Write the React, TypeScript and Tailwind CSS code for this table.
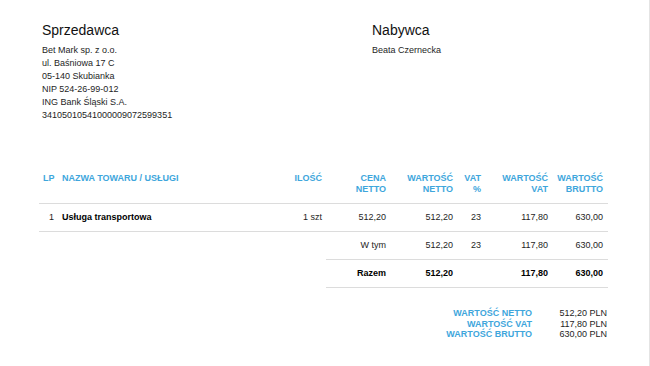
import React from "react";

const blue = "text-[#3ea6dc]";

export default function App() {
  const cellR = "px-[4px] text-right";
  return (
    <div
      className="w-[650px] h-[366px] bg-white border-r border-[#e4e4e4] text-[#1e1e1e] overflow-hidden"
      style={{ fontFamily: '"Liberation Sans", Arial, Helvetica, sans-serif' }}
    >
      <div className="flex pl-[42px] pt-[20px]">
        <div className="w-[330px]">
          <div className="text-[14px] leading-[20px] text-[#111]">Sprzedawca</div>
          <div className="mt-[4px] text-[9px] leading-[13px]">
            <div>Bet Mark sp. z o.o.</div>
            <div>ul. Baśniowa 17 C</div>
            <div>05-140 Skubianka</div>
            <div>NIP 524-26-99-012</div>
            <div>ING Bank Śląski S.A.</div>
            <div>34105010541000009072599351</div>
          </div>
        </div>
        <div>
          <div className="text-[14px] leading-[20px] text-[#111]">Nabywca</div>
          <div className="mt-[4px] text-[9px] leading-[13px]">
            <div>Beata Czernecka</div>
          </div>
        </div>
      </div>

      <div className="pl-[39px] mt-[51px]">
        <table className="table-fixed border-collapse w-[569px] text-[9px]">
          <colgroup>
            <col className="w-[19px]" />
            <col className="w-[212px]" />
            <col className="w-[56px]" />
            <col className="w-[64px]" />
            <col className="w-[67px]" />
            <col className="w-[28px]" />
            <col className="w-[67px]" />
            <col className="w-[56px]" />
          </colgroup>
          <thead>
            <tr className={`font-bold uppercase leading-[11px] ${blue} border-b border-[#dcdcdc] align-top`}>
              <th className="px-[4px] pb-[8px] text-left font-bold">LP</th>
              <th className="px-[4px] pb-[8px] text-left font-bold">NAZWA TOWARU / USŁUGI</th>
              <th className={`${cellR} pb-[8px] font-bold`}>ILOŚĆ</th>
              <th className={`${cellR} pb-[8px] font-bold`}>CENA<br />NETTO</th>
              <th className={`${cellR} pb-[8px] font-bold`}>WARTOŚĆ<br />NETTO</th>
              <th className={`${cellR} pb-[8px] font-bold`}>VAT<br />%</th>
              <th className={`${cellR} pb-[8px] font-bold`}>WARTOŚĆ<br />VAT</th>
              <th className="pl-[4px] pr-[5px] text-right pb-[8px] font-bold">WARTOŚĆ<br />BRUTTO</th>
            </tr>
          </thead>
          <tbody className="leading-[13px]">
            <tr className="border-b border-[#dcdcdc]">
              <td className={`${cellR} py-[7px]`}>1</td>
              <td className="px-[4px] py-[7px] font-bold text-black">Usługa transportowa</td>
              <td className={`${cellR} py-[7px]`}>1 szt</td>
              <td className={`${cellR} py-[7px]`}>512,20</td>
              <td className={`${cellR} py-[7px]`}>512,20</td>
              <td className={`${cellR} py-[7px]`}>23</td>
              <td className={`${cellR} py-[7px]`}>117,80</td>
              <td className="pl-[4px] pr-[5px] text-right py-[7px]">630,00</td>
            </tr>
            <tr>
              <td className="py-[7px]"></td>
              <td className="py-[7px]"></td>
              <td className="py-[7px]"></td>
              <td className={`${cellR} py-[7px] border-b border-[#dcdcdc]`}>W tym</td>
              <td className={`${cellR} py-[7px] border-b border-[#dcdcdc]`}>512,20</td>
              <td className={`${cellR} py-[7px] border-b border-[#dcdcdc]`}>23</td>
              <td className={`${cellR} py-[7px] border-b border-[#dcdcdc]`}>117,80</td>
              <td className="pl-[4px] pr-[5px] text-right py-[7px] border-b border-[#dcdcdc]">630,00</td>
            </tr>
            <tr className="font-bold text-black">
              <td className="py-[7px]"></td>
              <td className="py-[7px]"></td>
              <td className="py-[7px]"></td>
              <td className={`${cellR} py-[7px] border-b border-[#dcdcdc]`}>Razem</td>
              <td className={`${cellR} py-[7px] border-b border-[#dcdcdc]`}>512,20</td>
              <td className={`${cellR} py-[7px] border-b border-[#dcdcdc]`}></td>
              <td className={`${cellR} py-[7px] border-b border-[#dcdcdc]`}>117,80</td>
              <td className="pl-[4px] pr-[5px] text-right py-[7px] border-b border-[#dcdcdc]">630,00</td>
            </tr>
          </tbody>
        </table>
      </div>

      <div className="flex justify-end pr-[42px] mt-[20px] text-[9px] leading-[10.5px]">
        <div className={`text-right font-bold whitespace-nowrap ${blue}`}>
          <div>WARTOŚĆ NETTO</div>
          <div>WARTOŚĆ VAT</div>
          <div>WARTOŚĆ BRUTTO</div>
        </div>
        <div className="ml-[27px] w-[48px] text-right whitespace-nowrap">
          <div>512,20 PLN</div>
          <div>117,80 PLN</div>
          <div>630,00 PLN</div>
        </div>
      </div>
    </div>
  );
}
